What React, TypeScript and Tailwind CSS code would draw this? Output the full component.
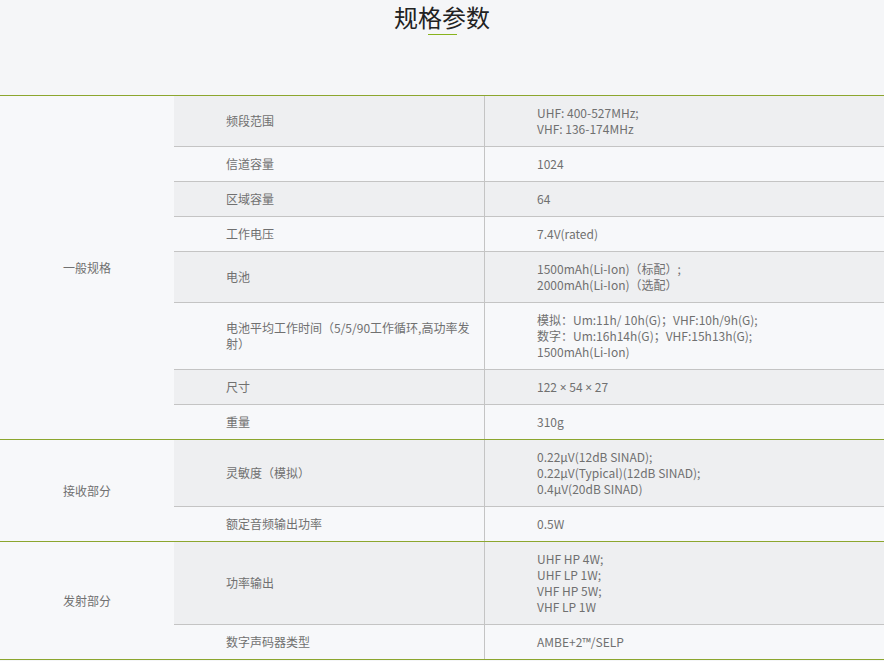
const groups = [
	{
		name: '一般规格',
		rows: [
			{ k: ['频段范围'], v: ['UHF: 400-527MHz;', 'VHF: 136-174MHz'] },
			{ k: ['信道容量'], v: ['1024'] },
			{ k: ['区域容量'], v: ['64'] },
			{ k: ['工作电压'], v: ['7.4V(rated)'] },
			{ k: ['电池'], v: ['1500mAh(Li-Ion)（标配）;', '2000mAh(Li-Ion)（选配）'] },
			{
				k: ['电池平均工作时间（5/5/90工作循环,高功率发', '射）'],
				v: ['模拟：Um:11h/ 10h(G)；VHF:10h/9h(G);', '数字：Um:16h14h(G)；VHF:15h13h(G);', '1500mAh(Li-Ion)'],
			},
			{ k: ['尺寸'], v: ['122 × 54 × 27'] },
			{ k: ['重量'], v: ['310g'] },
		],
	},
	{
		name: '接收部分',
		rows: [
			{ k: ['灵敏度（模拟）'], v: ['0.22μV(12dB SINAD);', '0.22μV(Typical)(12dB SINAD);', '0.4μV(20dB SINAD)'] },
			{ k: ['额定音频输出功率'], v: ['0.5W'] },
		],
	},
	{
		name: '发射部分',
		rows: [
			{ k: ['功率输出'], v: ['UHF HP 4W;', 'UHF LP 1W;', 'VHF HP 5W;', 'VHF LP 1W'] },
			{ k: ['数字声码器类型'], v: ['AMBE+2™/SELP'] },
		],
	},
]

// the CJK font draws × full width, the reference has the narrow latin one
function Value({ text }: { text: string }) {
	const parts = text.split('×')
	return (
		<span className="block h-[16px]">
			{parts.map((p, i) => (
				<span key={i}>
					{i > 0 && (
						<span className="leading-none" style={{ fontFamily: '"Noto Sans", sans-serif' }}>
							×
						</span>
					)}
					{p}
				</span>
			))}
		</span>
	)
}

export default function App() {
	let idx = 0

	return (
		<main
			className="min-h-[661px] w-[884px] bg-[#f5f6f8] text-[12px] leading-[16px] text-[#707070]"
			style={{ fontFamily: '"Noto Sans CJK SC", "Noto Sans", sans-serif' }}
		>
			<header className="flex flex-col items-center">
				<h1 className="h-[33px] pt-[1px] text-[24px] leading-[32px] font-normal text-[#222]">规格参数</h1>
				<div className="mt-[1px] h-[1px] w-[29px] bg-[#88b31d]" />
			</header>

			<section className="mt-[60px] border-t border-[#8ca62e]">
				{groups.map((g) => (
					<div key={g.name} className="flex border-b border-[#8ca62e] bg-[#f7f8fa]">
						<div className="flex w-[174px] shrink-0 items-center justify-center">{g.name}</div>
						<div className="flex flex-1 flex-col">
							{g.rows.map((r, i) => {
								const odd = idx++ % 2 === 0
								const last = i === g.rows.length - 1
								return (
									<div
										key={r.k[0]}
										className={`flex ${odd ? 'bg-[#eeeff1]' : 'bg-[#f7f8fa]'} ${
											last ? '' : 'border-b border-[#c4c4c4]'
										}`}
									>
										<div className="flex w-[310px] shrink-0 flex-col justify-center py-[9px] pl-[52px] whitespace-nowrap">
											{r.k.map((t) => (
												<span key={t}>{t}</span>
											))}
										</div>
										<div className="flex flex-1 flex-col justify-center border-l border-[#c4c4c4] py-[9px] pl-[52px] whitespace-nowrap">
											{r.v.map((t) => (
												<Value key={t} text={t} />
											))}
										</div>
									</div>
								)
							})}
						</div>
					</div>
				))}
			</section>
		</main>
	)
}
